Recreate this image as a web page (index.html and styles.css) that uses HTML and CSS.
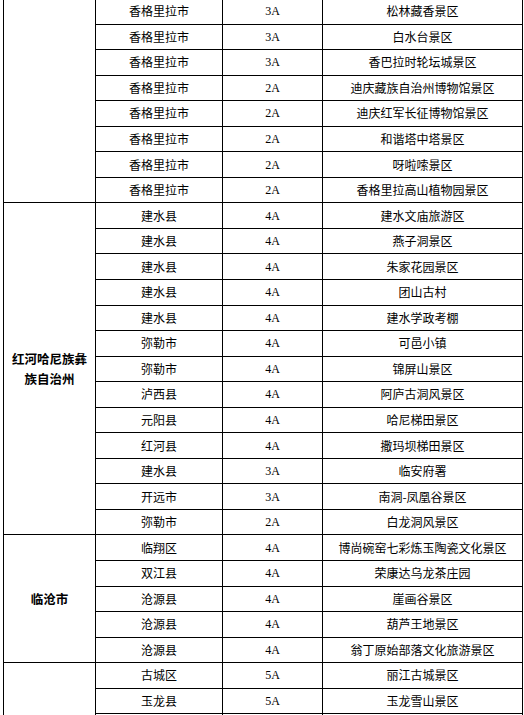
FILE: index.html
```html
<!DOCTYPE html>
<html lang="zh-CN">
<head>
<meta charset="utf-8">
<link rel="stylesheet" href="styles.css">
</head>
<body>
<table class="grid">
<colgroup><col class="c1"><col class="c2"><col class="c3"><col class="c4"></colgroup>
<tbody>
<tr><td class="region" rowspan="8"></td><td>香格里拉市</td><td class="grade">3A</td><td>松林藏香景区</td></tr>
<tr><td>香格里拉市</td><td class="grade">3A</td><td>白水台景区</td></tr>
<tr><td>香格里拉市</td><td class="grade">3A</td><td>香巴拉时轮坛城景区</td></tr>
<tr><td>香格里拉市</td><td class="grade">2A</td><td>迪庆藏族自治州博物馆景区</td></tr>
<tr><td>香格里拉市</td><td class="grade">2A</td><td>迪庆红军长征博物馆景区</td></tr>
<tr><td>香格里拉市</td><td class="grade">2A</td><td>和谐塔中塔景区</td></tr>
<tr><td>香格里拉市</td><td class="grade">2A</td><td>呀啦嗦景区</td></tr>
<tr><td>香格里拉市</td><td class="grade">2A</td><td>香格里拉高山植物园景区</td></tr>

<tr><td class="region" rowspan="13">红河哈尼族彝族自治州</td><td>建水县</td><td class="grade">4A</td><td>建水文庙旅游区</td></tr>
<tr><td>建水县</td><td class="grade">4A</td><td>燕子洞景区</td></tr>
<tr><td>建水县</td><td class="grade">4A</td><td>朱家花园景区</td></tr>
<tr><td>建水县</td><td class="grade">4A</td><td>团山古村</td></tr>
<tr><td>建水县</td><td class="grade">4A</td><td>建水学政考棚</td></tr>
<tr><td>弥勒市</td><td class="grade">4A</td><td>可邑小镇</td></tr>
<tr><td>弥勒市</td><td class="grade">4A</td><td>锦屏山景区</td></tr>
<tr><td>泸西县</td><td class="grade">4A</td><td>阿庐古洞风景区</td></tr>
<tr><td>元阳县</td><td class="grade">4A</td><td>哈尼梯田景区</td></tr>
<tr><td>红河县</td><td class="grade">4A</td><td>撒玛坝梯田景区</td></tr>
<tr><td>建水县</td><td class="grade">3A</td><td>临安府署</td></tr>
<tr><td>开远市</td><td class="grade">3A</td><td>南洞-凤凰谷景区</td></tr>
<tr><td>弥勒市</td><td class="grade">2A</td><td>白龙洞风景区</td></tr>

<tr><td class="region" rowspan="5">临沧市</td><td>临翔区</td><td class="grade">4A</td><td>博尚碗窑七彩炼玉陶瓷文化景区</td></tr>
<tr><td>双江县</td><td class="grade">4A</td><td>荣康达乌龙茶庄园</td></tr>
<tr><td>沧源县</td><td class="grade">4A</td><td>崖画谷景区</td></tr>
<tr><td>沧源县</td><td class="grade">4A</td><td>葫芦王地景区</td></tr>
<tr><td>沧源县</td><td class="grade">4A</td><td>翁丁原始部落文化旅游景区</td></tr>

<tr><td class="region" rowspan="3"></td><td>古城区</td><td class="grade">5A</td><td>丽江古城景区</td></tr>
<tr><td>玉龙县</td><td class="grade">5A</td><td>玉龙雪山景区</td></tr>
<tr><td></td><td class="grade"></td><td></td></tr>
</tbody>
</table>
</body>
</html>
```
FILE: styles.css
```css
html, body {
  margin: 0;
  padding: 0;
  background: #ffffff;
}
body {
  overflow: hidden;
  height: 715px;
}
.grid {
  border-collapse: collapse;
  table-layout: fixed;
  width: 519px;
  margin: -2px 0 0 3px;
  font-family: "Noto Sans CJK SC", "Noto Sans", sans-serif;
  font-size: 12px;
  color: #000000;
}
.c1 { width: 92px; }
.c2 { width: 127px; }
.c3 { width: 100px; }
.c4 { width: 200px; }
.grid tr {
  height: 25.55px;
}
.grid td {
  border: 1px solid #000000;
  padding: 0 3px;
  text-align: center;
  vertical-align: middle;
  line-height: 14px;
  white-space: nowrap;
}
.grid td.region {
  white-space: normal;
  font-weight: bold;
  font-size: 12.5px;
  line-height: 20px;
  padding: 0 4px;
}
.grid td.grade {
  font-family: "Liberation Serif", "DejaVu Serif", serif;
  font-size: 12px;
}
```
